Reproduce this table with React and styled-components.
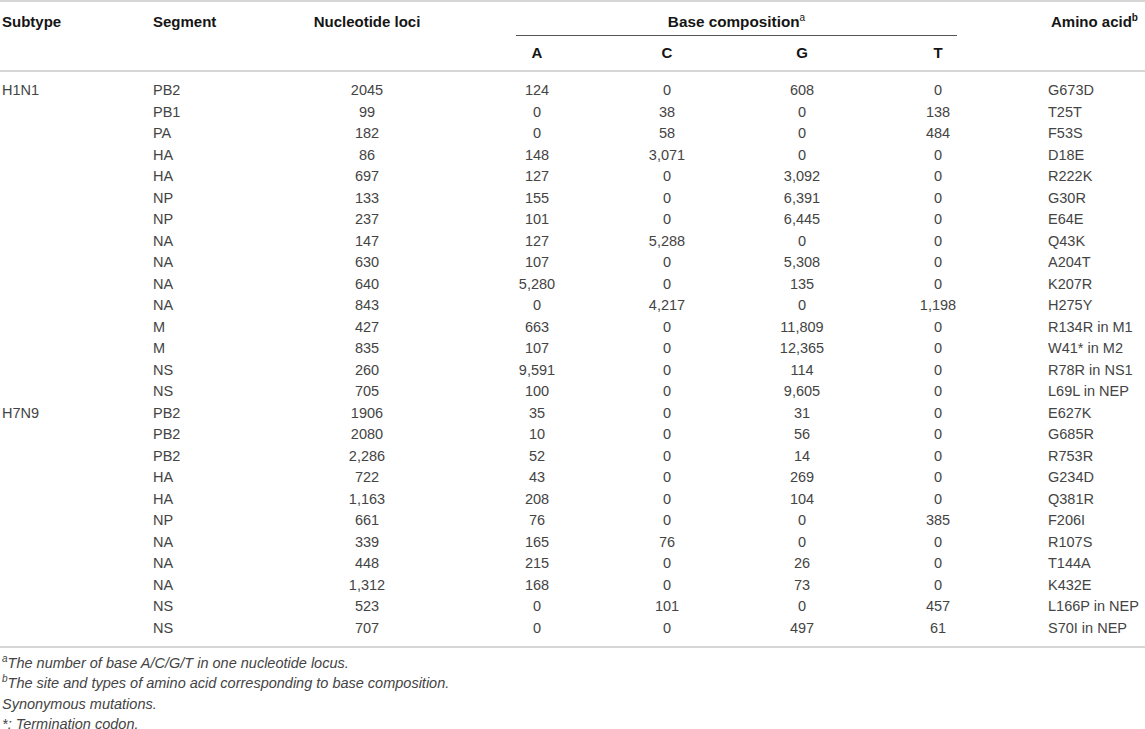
import React from 'react'
import styled, { createGlobalStyle } from 'styled-components'

const COLS = '153px 139px 150px 190px 70px 200px 72px 171px'

const GlobalStyle = createGlobalStyle`
  body {
    margin: 0;
    background: #fff;
    font-family: "Liberation Sans", Arial, sans-serif;
  }
`;

const Page = styled.div`
  width: 1145px;
`;

const Table = styled.div`
  border-top: 2px solid #d6d6d6;
`;

const Head = styled.div`
  display: grid;
  grid-template-columns: ${COLS};
  grid-template-rows: 34px 34px;
  border-bottom: 2px solid #d6d6d6;
`;

const HeadCell = styled.div`
  grid-column: ${p => p.col};
  grid-row: ${p => p.row || '1 / 3'};
  padding-top: ${p => p.top || 10}px;
  padding-left: ${p => p.pad || 0}px;
  font-size: 15px;
  font-weight: bold;
  line-height: 20px;
  color: #151515;
  text-align: ${p => p.align || 'center'};
`;

const Group = styled.div`
  grid-column: 4 / 8;
  grid-row: 1;
  margin: 0 17px 0 74px;
  box-sizing: border-box;
  border-bottom: 1px solid #555;
  padding-top: 10px;
  font-size: 15.3px;
  font-weight: bold;
  line-height: 20px;
  color: #151515;
  text-align: center;
`;

const Sup = styled.sup`
  font-size: 10px;
  line-height: 0;
  vertical-align: 6px;
  font-weight: ${p => p.light ? 'normal' : 'bold'};
`;

const Body = styled.div`
  padding: 8px 0 7px;
  border-bottom: 2px solid #d6d6d6;
`;

const Row = styled.div`
  display: grid;
  grid-template-columns: ${COLS};
  height: 21.5px;
  line-height: 21.5px;
  font-size: 14.5px;
  color: #444;
`;

const Cell = styled.div`
  text-align: ${p => p.left ? 'left' : 'center'};
  padding-left: ${p => p.pad || 0}px;
  white-space: nowrap;
`;

const Notes = styled.div`
  padding: 5px 0 0 2px;
`;

const Note = styled.div`
  font-size: 14.5px;
  font-style: italic;
  line-height: 20.3px;
  color: #444;
`;

const rows = [
  ['H1N1', 'PB2', '2045', '124', '0', '608', '0', 'G673D'],
  ['', 'PB1', '99', '0', '38', '0', '138', 'T25T'],
  ['', 'PA', '182', '0', '58', '0', '484', 'F53S'],
  ['', 'HA', '86', '148', '3,071', '0', '0', 'D18E'],
  ['', 'HA', '697', '127', '0', '3,092', '0', 'R222K'],
  ['', 'NP', '133', '155', '0', '6,391', '0', 'G30R'],
  ['', 'NP', '237', '101', '0', '6,445', '0', 'E64E'],
  ['', 'NA', '147', '127', '5,288', '0', '0', 'Q43K'],
  ['', 'NA', '630', '107', '0', '5,308', '0', 'A204T'],
  ['', 'NA', '640', '5,280', '0', '135', '0', 'K207R'],
  ['', 'NA', '843', '0', '4,217', '0', '1,198', 'H275Y'],
  ['', 'M', '427', '663', '0', '11,809', '0', 'R134R in M1'],
  ['', 'M', '835', '107', '0', '12,365', '0', 'W41* in M2'],
  ['', 'NS', '260', '9,591', '0', '114', '0', 'R78R in NS1'],
  ['', 'NS', '705', '100', '0', '9,605', '0', 'L69L in NEP'],
  ['H7N9', 'PB2', '1906', '35', '0', '31', '0', 'E627K'],
  ['', 'PB2', '2080', '10', '0', '56', '0', 'G685R'],
  ['', 'PB2', '2,286', '52', '0', '14', '0', 'R753R'],
  ['', 'HA', '722', '43', '0', '269', '0', 'G234D'],
  ['', 'HA', '1,163', '208', '0', '104', '0', 'Q381R'],
  ['', 'NP', '661', '76', '0', '0', '385', 'F206I'],
  ['', 'NA', '339', '165', '76', '0', '0', 'R107S'],
  ['', 'NA', '448', '215', '0', '26', '0', 'T144A'],
  ['', 'NA', '1,312', '168', '0', '73', '0', 'K432E'],
  ['', 'NS', '523', '0', '101', '0', '457', 'L166P in NEP'],
  ['', 'NS', '707', '0', '0', '497', '61', 'S70I in NEP'],
]

export default function App() {
  return (
    <Page>
      <GlobalStyle />
      <Table>
        <Head>
          <HeadCell col={1} align='left' pad={2}>Subtype</HeadCell>
          <HeadCell col={2} align='left'>Segment</HeadCell>
          <HeadCell col={3}>Nucleotide loci</HeadCell>
          <Group>Base composition<Sup light>a</Sup></Group>
          <HeadCell col={4} row={2} top={7}>A</HeadCell>
          <HeadCell col={5} row={2} top={7}>C</HeadCell>
          <HeadCell col={6} row={2} top={7}>G</HeadCell>
          <HeadCell col={7} row={2} top={7}>T</HeadCell>
          <HeadCell col={8} align='left' pad={77}>Amino acid<Sup>b</Sup></HeadCell>
        </Head>
        <Body>
          {rows.map((r, i) => (
            <Row key={i}>
              <Cell left pad={2}>{r[0]}</Cell>
              <Cell left>{r[1]}</Cell>
              <Cell>{r[2]}</Cell>
              <Cell>{r[3]}</Cell>
              <Cell>{r[4]}</Cell>
              <Cell>{r[5]}</Cell>
              <Cell>{r[6]}</Cell>
              <Cell left pad={74}>{r[7]}</Cell>
            </Row>
          ))}
        </Body>
        <Notes>
          <Note><Sup light>a</Sup>The number of base A/C/G/T in one nucleotide locus.</Note>
          <Note><Sup light>b</Sup>The site and types of amino acid corresponding to base composition.</Note>
          <Note>Synonymous mutations.</Note>
          <Note>*: Termination codon.</Note>
        </Notes>
      </Table>
    </Page>
  )
}
